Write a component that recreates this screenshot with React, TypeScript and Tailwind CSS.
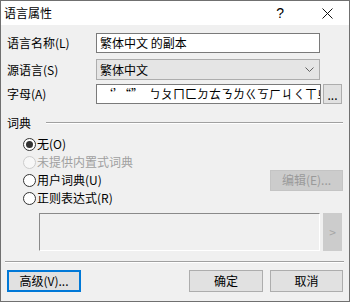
import React from 'react';

const Radio = ({ checked, disabled }: { checked?: boolean; disabled?: boolean }) => (
  <span
    className={`w-[13px] h-[13px] shrink-0 rounded-full border flex items-center justify-center ${
      disabled ? 'border-[#cccccc] bg-[#f7f7f7]' : 'border-[#333333] bg-white'
    }`}
  >
    {checked && <span className="w-[7px] h-[7px] rounded-full bg-[#333333]" />}
  </span>
);

const App: React.FC = () => {
  return (
    <div className="w-[350px] h-[302px] bg-[#f0f0f0] border border-[#707070] flex flex-col text-[12px] leading-none text-black font-['Noto_Sans_CJK_SC','Liberation_Sans',sans-serif] overflow-hidden select-none">
      {/* Title bar */}
      <div className="h-[24px] shrink-0 bg-white flex items-center">
        <span className="pl-[3px]">语言属性</span>
        <span className="ml-auto text-[14px] font-['Liberation_Sans',sans-serif]">?</span>
        <svg className="ml-[38px] mr-[16px]" width="11" height="11" viewBox="0 0 11 11">
          <path d="M0.5 0.5 L10.5 10.5 M10.5 0.5 L0.5 10.5" stroke="#111" strokeWidth="1" />
        </svg>
      </div>

      {/* Body */}
      <div className="flex flex-col pt-[8px] pl-[6px] pr-[6px]">
        <div className="flex items-center h-[20px]">
          <span className="w-[89px]">语言名称(L)</span>
          <div className="w-[224px] h-full border border-[#7a7a7a] bg-white pl-[3px] flex items-center">
            繁体中文 的副本
          </div>
        </div>

        <div className="flex items-center h-[21px] mt-[6px]">
          <span className="w-[89px]">源语言(S)</span>
          <div className="w-[224px] h-full border border-[#adadad] bg-[#e5e5e5] pl-[3px] flex items-center">
            <span>繁体中文</span>
            <svg className="ml-auto mr-[5px]" width="9" height="5" viewBox="0 0 9 5">
              <path d="M0.5 0.5 L4.5 4.5 L8.5 0.5" stroke="#606060" strokeWidth="1" fill="none" />
            </svg>
          </div>
        </div>

        <div className="flex items-center h-[20px] mt-[4px]">
          <span className="w-[89px]">字母(A)</span>
          <div className="w-[225px] h-full border border-[#7a7a7a] bg-white pl-[4px] overflow-hidden">
            <div className="h-full flex items-center whitespace-nowrap">
              ‘’“”{'\u2002'}ㄅㄆㄇㄈㄉㄊㄋㄌㄍㄎㄏㄐㄑㄒㄓㄔㄕㄖ
            </div>
          </div>
          <div className="ml-[2px] w-[19px] h-full border border-[#adadad] bg-[#e1e1e1] flex items-center justify-center pt-[2px]">
            ...
          </div>
        </div>

        {/* 词典 group */}
        <div className="flex items-center h-[14px] mt-[12px]">
          <span>词典</span>
          <div className="flex-1 ml-[15px] border-t border-[#a0a0a0] border-b border-b-white" />
        </div>

        <div className="flex flex-col mt-[5px] pl-[16px]">
          <div className="flex items-center h-[18px] gap-[1px]">
            <Radio checked />
            <span>无(O)</span>
          </div>
          <div className="flex items-center h-[18px] gap-[1px] text-[#a0a0a0]">
            <Radio disabled />
            <span>未提供内置式词典</span>
          </div>
          <div className="flex items-center h-[18px] gap-[1px]">
            <Radio />
            <span>用户词典(U)</span>
            <div className="ml-auto w-[73px] h-[21px] shrink-0 bg-[#cccccc] border border-[#c4c4c4] text-[#9a9a9a] flex items-center justify-center">
              编辑(E)...
            </div>
          </div>
          <div className="flex items-center h-[18px] gap-[1px]">
            <Radio />
            <span>正则表达式(R)</span>
          </div>
        </div>

        <div className="flex mt-[6px] h-[38px]">
          <div className="ml-[32px] w-[281px] h-full border-t border-l border-[#8a8a8a] border-r border-b border-r-white border-b-white bg-[#f0f0f0]" />
          <div className="ml-[3px] w-[19px] h-full bg-[#cccccc] text-[#a6a6a6] flex items-center justify-center">
            &gt;
          </div>
        </div>

        <div className="mt-[10px] -ml-[2px] -mr-[1px] border-t border-[#a0a0a0] border-b border-b-white" />

        <div className="flex mt-[7px] h-[22px]">
          <div className="w-[74px] h-full border-2 border-[#0078d7] bg-[#e1e1e1] flex items-center justify-center">
            高级(V)...
          </div>
          <div className="ml-auto w-[74px] h-full border border-[#adadad] bg-[#e1e1e1] flex items-center justify-center">
            确定
          </div>
          <div className="ml-[7px] w-[73px] h-full border border-[#adadad] bg-[#e1e1e1] flex items-center justify-center">
            取消
          </div>
        </div>
      </div>
    </div>
  );
};

export default App;
